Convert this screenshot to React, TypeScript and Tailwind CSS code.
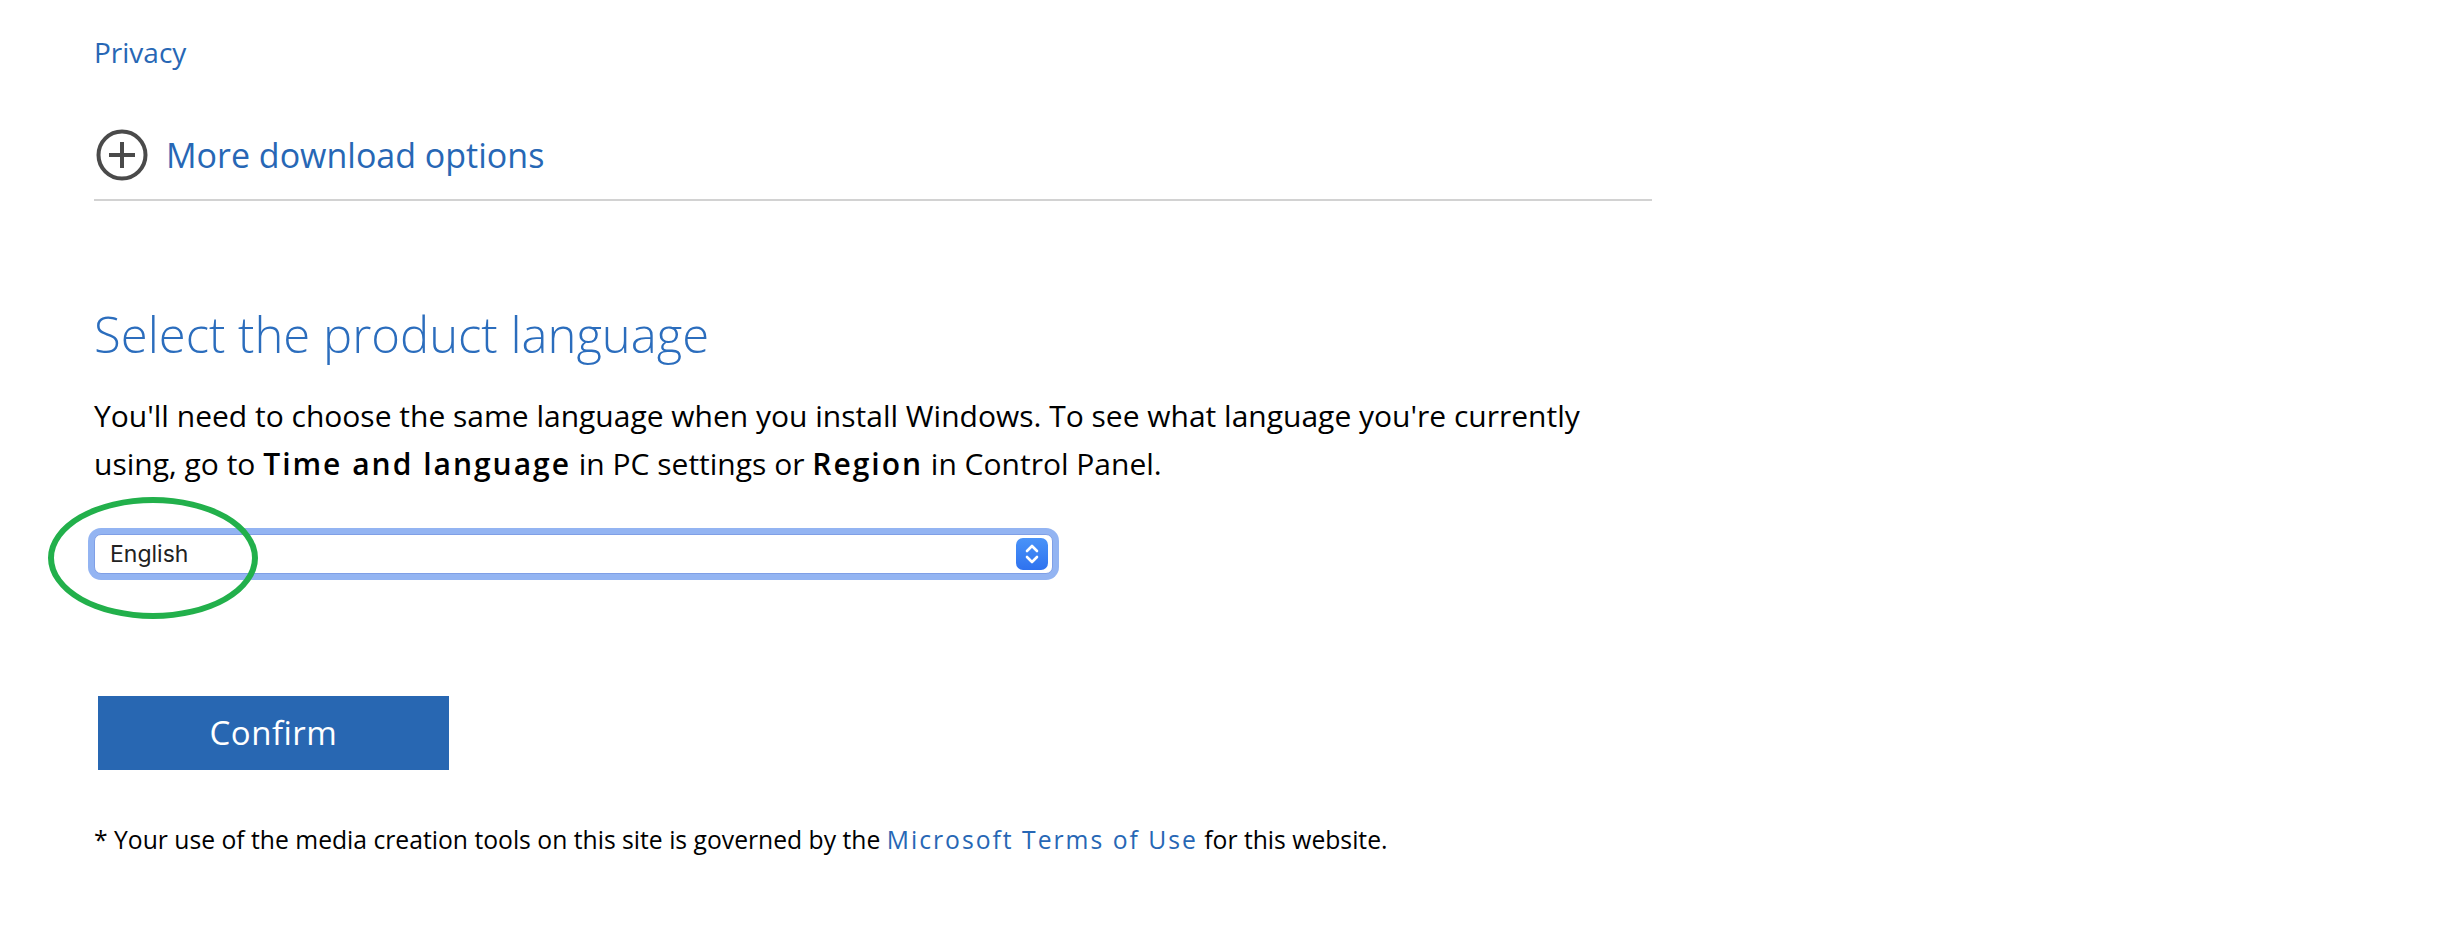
const body = "font-['Open_Sans','Segoe_UI',sans-serif]";

function PlusCircle() {
  return (
    <svg width="56" height="56" viewBox="0 0 56 56" className="shrink-0">
      <circle cx="28" cy="28" r="23.5" fill="none" stroke="#4a4a4a" strokeWidth="4" />
      <path d="M15 28h26M28 15v26" stroke="#4a4a4a" strokeWidth="4" />
    </svg>
  );
}

function LanguageSelect() {
  return (
    <div className="relative mt-[46px] w-[959px]">
      {/* annotation drawn over the page */}
      <div className="pointer-events-none absolute left-[-46px] top-[-37px] z-10 h-[122px] w-[210px] rounded-[50%] border-[6px] border-[#22b04b]" />
      <div className="flex h-[40px] items-center justify-between rounded-[7px] border border-[#7f9fe6] bg-white pl-[15px] pr-[4px] shadow-[0_0_0_6px_#93b4f2]">
        <span className="font-['Inter',sans-serif] text-[23px] text-[#222]">English</span>
        <span className="flex h-[32px] w-[32px] items-center justify-center rounded-[7px] bg-gradient-to-b from-[#4a93f8] to-[#2f72ef]">
          <svg width="16" height="22" viewBox="0 0 16 22" fill="none" stroke="white" strokeWidth="2.6" strokeLinecap="round" strokeLinejoin="round">
            <path d="M3 8l5-5 5 5M3 14l5 5 5-5" />
          </svg>
        </span>
      </div>
    </div>
  );
}

export default function App() {
  return (
    <div className={`min-h-screen bg-white pl-[94px] ${body}`}>
      <div className="w-[1558px]">
        {/* Privacy link */}
        <div className="pt-[33px]">
          <a className="text-[28px] font-medium leading-[38px] text-[#2767b5]">Privacy</a>
        </div>

        {/* More download options */}
        <div className="mt-[56px] border-b-2 border-[#d2d2d2] pb-[16px]">
          <div className="flex items-center gap-4">
            <PlusCircle />
            <span className="text-[34px] font-medium leading-[46px] text-[#2767b5]">More download options</span>
          </div>
        </div>

        {/* Language section */}
        <h1 className="mt-[101px] text-[49px] font-light leading-[65px] text-[#2b6dbd]">Select the product language</h1>
        <p className="mt-[25px] text-[30px] leading-[48px] text-black">
          You'll need to choose the same language when you install Windows. To see what language you're currently using, go to{" "}
          <span className="font-semibold tracking-[2px]">Time and language</span> in PC settings or{" "}
          <span className="font-semibold tracking-[2px]">Region</span> in Control Panel.
        </p>

        <LanguageSelect />

        <button className="ml-[4px] mt-[122px] flex h-[74px] w-[351px] items-center justify-center bg-[#2867b2] text-[33px] tracking-[0.5px] text-white">
          Confirm
        </button>

        <p className="mt-[53px] text-[24.7px] leading-[33px] text-black">
          * Your use of the media creation tools on this site is governed by the{" "}
          <a className="font-medium tracking-[2px] text-[#2767b5]">Microsoft Terms of Use</a> for this website.
        </p>
      </div>
    </div>
  );
}
